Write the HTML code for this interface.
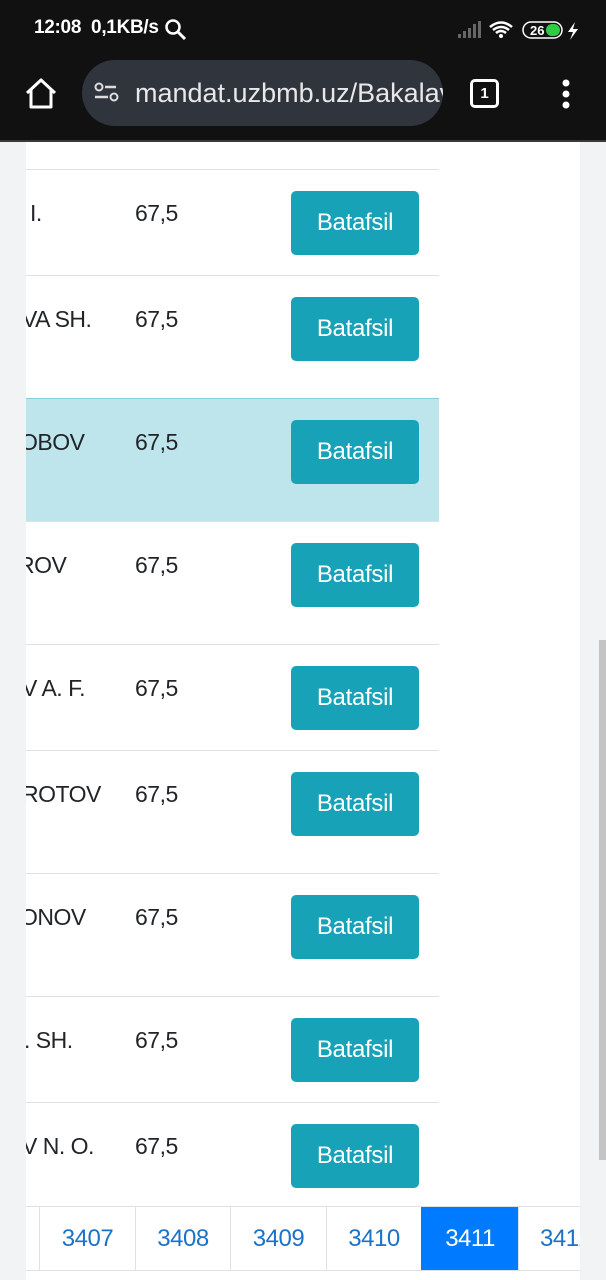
<!DOCTYPE html>
<html><head><meta charset="utf-8"><style>
*{margin:0;padding:0;box-sizing:border-box}
body{width:606px;height:1280px;overflow:hidden;background:#f2f3f5;font-family:"Liberation Sans",sans-serif;position:relative}
.sb{position:absolute;left:0;top:0;width:606px;height:58px;background:#111;color:#fff}
.tb{position:absolute;left:0;top:58px;width:606px;height:84px;background:#111;border-bottom:2px solid #3a3a3a}
.pill{position:absolute;left:82px;top:2px;width:361px;height:66px;border-radius:33px;background:#30343d;color:#e8e8ea;font-size:27px;line-height:66px;padding-left:53px;white-space:nowrap;overflow:hidden}
.card{position:absolute;left:26px;top:142px;width:554px;height:1138px;background:#fff;overflow:hidden}
.row{position:absolute;left:0;width:413px;border-top:1px solid #dee2e6}
.row span{position:absolute;top:30px;font-size:23px;color:#212529;letter-spacing:-0.5px}
.btn{position:absolute;left:265px;top:21px;width:128px;height:64px;background:#17a2b8;border-radius:5px;color:#fff;font-size:24px;line-height:64px;text-align:center;letter-spacing:-0.3px}
.pg{position:absolute;top:1064px;left:0;width:554px;height:65px;border-top:1px solid #dee2e6;border-bottom:1px solid #dee2e6}
.pc{position:absolute;top:0;height:63px;border-left:1px solid #dee2e6;color:#1a73c8;font-size:24px;line-height:63px;text-align:center;letter-spacing:-0.5px}
</style></head><body>
<div class="sb">
<div style="position:absolute;left:34px;top:17px;font-size:19px;font-weight:bold;letter-spacing:-0.3px">12:08&nbsp; 0,1KB/s</div>
<svg style="position:absolute;left:164px;top:18px" width="24" height="22"><circle cx="9" cy="9" r="6.5" stroke="#fff" stroke-width="2.5" fill="none"/><line x1="14" y1="14" x2="21" y2="21" stroke="#fff" stroke-width="3"/></svg>
<svg style="position:absolute;left:456px;top:18px" width="130" height="24"><g fill="#666"><rect x="2" y="16" width="3" height="4"/><rect x="7" y="13" width="3" height="7"/><rect x="12" y="10" width="3" height="10"/><rect x="17" y="6" width="3" height="14"/><rect x="22" y="3" width="3" height="17"/></g>
<path d="M34 9 Q45 0 56 9 M37 12 Q45 6 53 12 M40 15 Q45 11 50 15" stroke="#fff" stroke-width="2.5" fill="none"/><circle cx="45" cy="18" r="2" fill="#fff"/>
<rect x="67" y="4" width="39" height="16" rx="8" stroke="#fff" stroke-width="1.5" fill="none"/><rect x="90" y="6" width="14" height="12" rx="6" fill="#2ecc40"/><text x="74" y="17" font-size="13" font-weight="bold" fill="#fff" font-family="Liberation Sans">26</text>
<path d="M119 4 L112 14 H117 L114 22 L122 11 H117 Z" fill="#fff"/></svg>
</div>
<div class="tb">
<svg style="position:absolute;left:24px;top:18px" width="34" height="34"><path d="M3 17 L17 4 L31 17 M7 14 V31 H27 V14" stroke="#fff" stroke-width="3" fill="none" stroke-linejoin="round"/></svg>
<div class="pill">mandat.uzbmb.uz/Bakalavr</div>
<svg style="position:absolute;left:94px;top:24px" width="30" height="22"><circle cx="5" cy="5" r="3.5" stroke="#ddd" stroke-width="2" fill="none"/><line x1="11" y1="5" x2="22" y2="5" stroke="#ddd" stroke-width="2.5"/><line x1="1" y1="15" x2="14" y2="15" stroke="#ddd" stroke-width="2.5"/><circle cx="20" cy="15" r="3.5" stroke="#ddd" stroke-width="2" fill="none"/></svg>
<div style="position:absolute;left:470px;top:21px;width:29px;height:29px;border:3px solid #fff;border-radius:5px;color:#fff;font-size:15px;font-weight:bold;text-align:center;line-height:23px">1</div>
<svg style="position:absolute;left:558px;top:20px" width="16" height="34"><circle cx="8" cy="5" r="3.5" fill="#fff"/><circle cx="8" cy="16" r="3.5" fill="#fff"/><circle cx="8" cy="27" r="3.5" fill="#fff"/></svg>
</div>
<div class="card">
<div class="row" style="top:27px;height:106px"><span style="left:4px">I.</span><span style="left:109px">67,5</span><div class="btn">Batafsil</div></div>
<div class="row" style="top:133px;height:123px"><span style="left:-4px">VA SH.</span><span style="left:109px">67,5</span><div class="btn">Batafsil</div></div>
<div class="row" style="top:256px;height:123px;background:#bee5eb;border-top-color:#86cfda"><span style="left:-6px">OBOV</span><span style="left:109px">67,5</span><div class="btn">Batafsil</div></div>
<div class="row" style="top:379px;height:123px"><span style="left:-8px">ROV</span><span style="left:109px">67,5</span><div class="btn">Batafsil</div></div>
<div class="row" style="top:502px;height:106px"><span style="left:-4px">V A. F.</span><span style="left:109px">67,5</span><div class="btn">Batafsil</div></div>
<div class="row" style="top:608px;height:123px"><span style="left:-4px">ROTOV</span><span style="left:109px">67,5</span><div class="btn">Batafsil</div></div>
<div class="row" style="top:731px;height:123px"><span style="left:-6px">ONOV</span><span style="left:109px">67,5</span><div class="btn">Batafsil</div></div>
<div class="row" style="top:854px;height:106px"><span style="left:-2px">. SH.</span><span style="left:109px">67,5</span><div class="btn">Batafsil</div></div>
<div class="row" style="top:960px;height:104px"><span style="left:-4px">V N. O.</span><span style="left:109px">67,5</span><div class="btn">Batafsil</div></div>
<div class="pg">
<div class="pc" style="left:13px;width:96px">3407</div>
<div class="pc" style="left:109px;width:95px">3408</div>
<div class="pc" style="left:204px;width:96px">3409</div>
<div class="pc" style="left:300px;width:95px">3410</div>
<div class="pc" style="left:395px;width:97px;background:#007bff;color:#fff;border-color:#007bff">3411</div>
<div class="pc" style="left:492px;width:96px;text-align:left;padding-left:21px">3412</div>
</div>
</div>
<div style="position:absolute;left:599px;top:640px;width:7px;height:520px;background:#c4c4c4"></div>
</body></html>
